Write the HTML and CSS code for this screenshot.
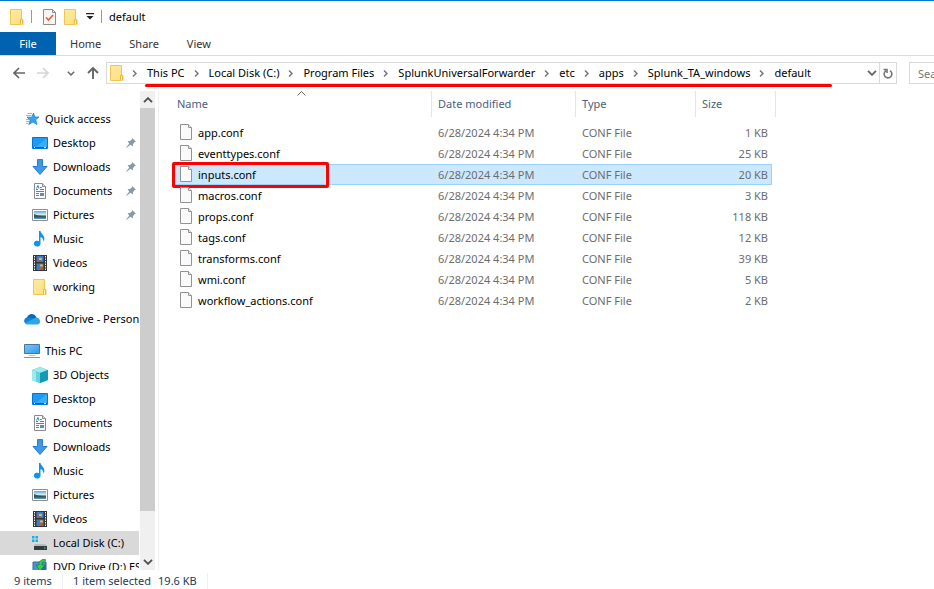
FILE: index.html
```html
<!DOCTYPE html>
<html lang="en">
<head>
<meta charset="utf-8">
<title>default</title>
<link rel="stylesheet" href="styles.css">
</head>
<body>
<svg class="defs" aria-hidden="true">
  <defs>
    <linearGradient id="g-folder" x1="0" y1="0" x2="1" y2="1"><stop offset="0" stop-color="#ffeaa2"/><stop offset="1" stop-color="#fddf7e"/></linearGradient>
    <linearGradient id="g-screen" x1="0" y1="0" x2="1" y2="1"><stop offset="0" stop-color="#7cc7fb"/><stop offset="1" stop-color="#2d9bec"/></linearGradient>
    <linearGradient id="g-sky" x1="0" y1="0" x2="0" y2="1"><stop offset="0" stop-color="#5aa9e6"/><stop offset=".5" stop-color="#e4f3fa"/><stop offset=".6" stop-color="#37695d"/><stop offset="1" stop-color="#5f9ac5"/></linearGradient>
  </defs>
  <symbol id="folder" viewBox="0 0 14 16"><path d="M.5.5h11v10h1.500v5h-12.500z" fill="url(#g-folder)" stroke="#efc656"/><path d="M10.500 15.500v-5h2v5" fill="#fff0b5" stroke="#e9bb3f"/></symbol>
  <symbol id="check" viewBox="0 0 13 16"><path d="M.5.500h9l3 3v12H.500z" fill="#f5f5f5" stroke="#8c8c8c"/><path d="M9.500.500v3h3" fill="none" stroke="#8c8c8c"/><path d="M3 8.500l2.500 2.500 4.500-5" fill="none" stroke="#e8622a" stroke-width="1.700"/></symbol>
  <symbol id="more" viewBox="0 0 8 7"><path d="M0 0h8v1.300H0zM.5 3h7L4 6.500z" fill="#222"/></symbol>
  <symbol id="left" viewBox="0 0 12 12"><path d="M12 6H1M6 1L1 6l5 5" fill="none" stroke="currentColor" stroke-width="1.700"/></symbol>
  <symbol id="right" viewBox="0 0 12 12"><path d="M0 6h11M6 1l5 5-5 5" fill="none" stroke="currentColor" stroke-width="1.700"/></symbol>
  <symbol id="up" viewBox="0 0 12 12"><path d="M6 12V1M1 6l5-5 5 5" fill="none" stroke="currentColor" stroke-width="1.900"/></symbol>
  <symbol id="down" viewBox="0 0 10 6"><path d="M1 .8l4 4 4-4" fill="none" stroke="currentColor" stroke-width="1.900"/></symbol>
  <symbol id="top" viewBox="0 0 10 6"><path d="M1 5.200l4-4 4 4" fill="none" stroke="currentColor" stroke-width="1.900"/></symbol>
  <symbol id="sort" viewBox="0 0 9 5"><path d="M.5 4.500l4-4 4 4" fill="none" stroke="currentColor"/></symbol>
  <symbol id="sep" viewBox="0 0 5 7"><path d="M1 .5l3 3-3 3" fill="none" stroke="#777" stroke-width="1.500"/></symbol>
  <symbol id="refresh" viewBox="0 0 10 11"><path d="M7 2.600A3.900 3.900 0 1 1 3 2.600M.5 1.500h3.500v3.500" fill="none" stroke="#777" stroke-width="1.600"/></symbol>
  <symbol id="pin" viewBox="0 0 10 10"><path d="M6.200 0L10 3.800 8.800 4 7 6l-.3 2.500L4.500 6.700.5 9.800 0 9.500 3.300 5.500 1.500 3.300 4 3l2-1.800z" fill="#8a99a6"/></symbol>
  <symbol id="star" viewBox="0 0 16 16"><path d="M9.500 2l1.300 4h4.200l-3.300 2.800L13 13.500l-4-2.600-4.200 2.600 1.400-4.600L3 6.200h4.800z" fill="#35a4f0" stroke="#1b86d1" stroke-width=".8"/><path d="M3.500 2.500H8M2 4.500h5.500M2 8.500h3M2 10.500h3M2 12.500h2" stroke="#58b5ee" stroke-width=".8"/></symbol>
  <symbol id="desktop" viewBox="0 0 16 16"><path d="M.5 2.500h15v11H.5z" fill="#189cf7" stroke="#0873c8"/><path d="M15 3v9H4z" fill="#39adfb"/><path d="M1 12.500h14" stroke="#075da5"/><path d="M2 12.500h1M12 12.500h2" stroke="#fff"/></symbol>
  <symbol id="download" viewBox="0 0 16 16"><path d="M5.500.5h5v7h4.500L8 15.500 1 7.500h4.500z" fill="#3f98e3" stroke="#2b7fd0"/></symbol>
  <symbol id="document" viewBox="0 0 16 16"><path d="M2.500.5h8l3 3v12h-11z" fill="#fafafa" stroke="#8b8b8b"/><path d="M10.500.5v3h3" fill="#ddd" stroke="#8b8b8b"/><path d="M4 6.500h2M8 4.500h2M8 6.500h4M4 8.500h8M4 10.500h3M4 12.500h3" stroke="#338bd0"/><path d="M4.500 5.500l1.500-3 1 3" fill="none" stroke="#2886d5"/><path d="M8 10h4v3H8z" fill="#5b91a7"/></symbol>
  <symbol id="picture" viewBox="0 0 16 16"><path d="M.5 2.500h15v11H.5z" fill="#fff" stroke="#909090"/><path d="M2 4h12v8H2z" fill="url(#g-sky)"/><path d="M2 7l4 1.500 8 1v1H2z" fill="#315b54"/></symbol>
  <symbol id="music" viewBox="0 0 16 16"><path d="M7 0h1.500c.3 3 4.500 4 3.800 8.500-.2 1-.8 1.500-1.300 2 .6-2.500-.5-4-2.500-4.500v6.800A3.300 2.900 0 1 1 7 10.200z" fill="#0a96ee"/></symbol>
  <symbol id="video" viewBox="0 0 16 16"><path d="M1 0h14v16H1z" fill="#353535"/><path d="M4.500 1h7v6h-7zM4.500 8.500h7v6.500h-7z" fill="#427dcb"/><path d="M2.500 1v14M13.500 1v14" stroke="#eee" stroke-dasharray="1.500 1"/><path d="M7 3h3v2H7z" fill="#e9b72d"/><path d="M5 5h3v2H5zM7 12h4v3H7z" fill="#b65834"/><path d="M8 9.500h3v2H8z" fill="#e8b52f"/></symbol>
  <symbol id="cloud" viewBox="0 0 16 16"><path d="M3 6.500C4.500 2 10.500 1.500 12.500 6.500L14 9l-7 3.500L1.500 12A3.600 3.600 0 0 1 3 6.500z" fill="#0868b9"/><path d="M3 6.500c2-.7 3.600-.3 5 .7l3.500 2L5 13H3C-1 12.500-.5 7 3 6.500z" fill="#1280d3"/><path d="M1 12l7-3.500c1.500-.8 2.500-2.200 4.500-2 2.500.4 3.500 2 3.500 4a3 3 0 0 1-3 3H4c-1.300 0-2.300-.5-3-1.500z" fill="#2aa7ea"/></symbol>
  <symbol id="pc" viewBox="0 0 16 16"><path d="M.5 1.500h15v9H.5z" fill="url(#g-screen)" stroke="#53738e"/><path d="M5 12.500h6" stroke="#b7c2ca"/><path d="M0 14.500h16" stroke="#8198aa"/></symbol>
  <symbol id="cube" viewBox="0 0 16 16"><path d="M0 3l8-3 8 3v10l-8 3-8-3z" fill="#2fb6cc"/><path d="M0 3l8-3 8 3-8 3z" fill="#9eebed"/><path d="M0 3l8 3v10l-8-3z" fill="#61d4dc"/><path d="M8 6l8-3v10l-8 3z" fill="#1599b5"/><path d="M0 3l4 1.500v10L0 13z" fill="#a0e9e9"/></symbol>
  <symbol id="disk" viewBox="0 0 16 16"><path d="M0 1h2.500v2.500H0zM3.500 1H6v2.500H3.500zM0 4.500h2.500V7H0zM3.500 4.500H6V7H3.500z" fill="#12b2ec"/><path d="M3 9h10l2 2H2z" fill="#b9bdc0"/><path d="M2 11h13v4H2z" fill="#343b3d"/><path d="M12 13h1.500" stroke="#4ee37c"/></symbol>
  <symbol id="dvd" viewBox="0 0 16 16"><path d="M1 3h13v11H1z" fill="#4795d7" stroke="#336b9d"/><path d="M3 14l11-9v9z" fill="#296fab"/><path d="M11 0L7 3v3H4l4 6 5-6h-3V4l4-3z" fill="#39cf4b" stroke="#15812c" stroke-width=".7"/></symbol>
  <symbol id="file" viewBox="0 0 12 16"><path d="M.5.500h8l3 3v12H.500z" fill="#fafafa" stroke="#929292"/><path d="M8.500.500v3h3" fill="#eee" stroke="#929292"/></symbol>
</svg>

<div class="window">
  <header class="titlebar">
    <svg class="folder"><use href="#folder"/></svg>
    <span class="bar"></span>
    <div class="quick">
      <button class="plain" aria-label="Properties"><svg class="check"><use href="#check"/></svg></button>
      <button class="plain" aria-label="New folder"><svg class="folder"><use href="#folder"/></svg></button>
      <button class="plain" aria-label="Customize toolbar"><svg class="more"><use href="#more"/></svg></button>
    </div>
    <span class="bar"></span>
    <h1>default</h1>
  </header>

  <nav class="ribbon">
    <button class="tab file-tab">File</button>
    <button class="tab">Home</button>
    <button class="tab">Share</button>
    <button class="tab">View</button>
  </nav>

  <div class="navbar">
    <div class="arrows">
      <button class="plain" aria-label="Back"><svg class="arrow"><use href="#left"/></svg></button>
      <button class="plain faint" aria-label="Forward"><svg class="arrow"><use href="#right"/></svg></button>
      <button class="plain recent" aria-label="Recent locations"><svg><use href="#down"/></svg></button>
      <button class="plain" aria-label="Up"><svg class="arrow"><use href="#up"/></svg></button>
    </div>
    <div class="address">
      <svg class="folder"><use href="#folder"/></svg>
      <svg class="sep"><use href="#sep"/></svg><a href="#">This PC</a>
      <svg class="sep"><use href="#sep"/></svg><a href="#">Local Disk (C:)</a>
      <svg class="sep"><use href="#sep"/></svg><a href="#">Program Files</a>
      <svg class="sep"><use href="#sep"/></svg><a href="#">SplunkUniversalForwarder</a>
      <svg class="sep"><use href="#sep"/></svg><a href="#">etc</a>
      <svg class="sep"><use href="#sep"/></svg><a href="#">apps</a>
      <svg class="sep"><use href="#sep"/></svg><a href="#">Splunk_TA_windows</a>
      <svg class="sep"><use href="#sep"/></svg><a href="#">default</a>
      <button class="plain history" aria-label="Previous locations"><svg class="chevron"><use href="#down"/></svg></button>
      <button class="plain refresh" aria-label="Refresh"><svg><use href="#refresh"/></svg></button>
      <span class="underline"></span>
    </div>
    <input class="search" type="text" placeholder="Search default" aria-label="Search default">
  </div>

  <div class="body">
    <aside class="sidebar">
      <div class="tree">
        <ul>
          <li><a href="#"><svg><use href="#star"/></svg>Quick access</a></li>
          <li class="sub"><a href="#"><svg><use href="#desktop"/></svg>Desktop<svg class="pin"><use href="#pin"/></svg></a></li>
          <li class="sub"><a href="#"><svg><use href="#download"/></svg>Downloads<svg class="pin"><use href="#pin"/></svg></a></li>
          <li class="sub"><a href="#"><svg><use href="#document"/></svg>Documents<svg class="pin"><use href="#pin"/></svg></a></li>
          <li class="sub"><a href="#"><svg><use href="#picture"/></svg>Pictures<svg class="pin"><use href="#pin"/></svg></a></li>
          <li class="sub"><a href="#"><svg><use href="#music"/></svg>Music</a></li>
          <li class="sub"><a href="#"><svg><use href="#video"/></svg>Videos</a></li>
          <li class="sub"><a href="#"><svg><use href="#folder"/></svg>working</a></li>
        </ul>
        <ul>
          <li><a href="#"><svg><use href="#cloud"/></svg>OneDrive - Personal</a></li>
        </ul>
        <ul>
          <li><a href="#"><svg><use href="#pc"/></svg>This PC</a></li>
          <li class="sub"><a href="#"><svg><use href="#cube"/></svg>3D Objects</a></li>
          <li class="sub"><a href="#"><svg><use href="#desktop"/></svg>Desktop</a></li>
          <li class="sub"><a href="#"><svg><use href="#document"/></svg>Documents</a></li>
          <li class="sub"><a href="#"><svg><use href="#download"/></svg>Downloads</a></li>
          <li class="sub"><a href="#"><svg><use href="#music"/></svg>Music</a></li>
          <li class="sub"><a href="#"><svg><use href="#picture"/></svg>Pictures</a></li>
          <li class="sub"><a href="#"><svg><use href="#video"/></svg>Videos</a></li>
          <li class="sub current"><a href="#"><svg><use href="#disk"/></svg>Local Disk (C:)</a></li>
          <li class="sub"><a href="#"><svg><use href="#dvd"/></svg>DVD Drive (D:) ESD-ISO</a></li>
        </ul>
      </div>
      <div class="scrollbar">
        <button class="plain" aria-label="Scroll up"><svg class="chevron"><use href="#top"/></svg></button>
        <div class="thumb"></div>
        <button class="plain" aria-label="Scroll down"><svg class="chevron"><use href="#down"/></svg></button>
      </div>
    </aside>

    <main class="files">
      <table>
        <thead>
          <tr><th class="name">Name<svg class="sort"><use href="#sort"/></svg></th><th class="date">Date modified</th><th class="type">Type</th><th class="size">Size</th></tr>
        </thead>
        <tbody>
          <tr><td><svg><use href="#file"/></svg>app.conf</td><td>6/28/2024 4:34 PM</td><td>CONF File</td><td>1 KB</td></tr>
          <tr><td><svg><use href="#file"/></svg>eventtypes.conf</td><td>6/28/2024 4:34 PM</td><td>CONF File</td><td>25 KB</td></tr>
          <tr class="selected"><td><svg><use href="#file"/></svg>inputs.conf<span class="highlight"></span></td><td>6/28/2024 4:34 PM</td><td>CONF File</td><td>20 KB</td></tr>
          <tr><td><svg><use href="#file"/></svg>macros.conf</td><td>6/28/2024 4:34 PM</td><td>CONF File</td><td>3 KB</td></tr>
          <tr><td><svg><use href="#file"/></svg>props.conf</td><td>6/28/2024 4:34 PM</td><td>CONF File</td><td>118 KB</td></tr>
          <tr><td><svg><use href="#file"/></svg>tags.conf</td><td>6/28/2024 4:34 PM</td><td>CONF File</td><td>12 KB</td></tr>
          <tr><td><svg><use href="#file"/></svg>transforms.conf</td><td>6/28/2024 4:34 PM</td><td>CONF File</td><td>39 KB</td></tr>
          <tr><td><svg><use href="#file"/></svg>wmi.conf</td><td>6/28/2024 4:34 PM</td><td>CONF File</td><td>5 KB</td></tr>
          <tr><td><svg><use href="#file"/></svg>workflow_actions.conf</td><td>6/28/2024 4:34 PM</td><td>CONF File</td><td>2 KB</td></tr>
        </tbody>
      </table>
    </main>
  </div>

  <footer class="status">
    <span class="count">9 items</span>
    <span class="picked"><span>1 item selected</span><span>19.6 KB</span></span>
  </footer>
</div>
</body>
</html>
```
FILE: styles.css
```css
* { box-sizing: border-box; }
body { margin: 0; background: #fff; color: #000; font: 11px/16px "Noto Sans", "Open Sans", sans-serif; }
a { color: inherit; text-decoration: none; white-space: nowrap; }
ul { list-style: none; margin: 0; padding: 0; }
svg { display: block; flex: none; width: 16px; height: 16px; }
.defs { position: absolute; width: 0; height: 0; }
button, input { font: inherit; color: inherit; }
.plain { display: flex; align-items: center; justify-content: center; margin: 0; padding: 0; border: 0; background: none; }

.window { display: flex; flex-direction: column; height: 100vh; overflow: hidden; border-top: 1px solid #0078d7; }
svg.folder { width: 14px; height: 16px; }

.titlebar { display: flex; align-items: center; flex: none; height: 31px; padding-left: 10px; gap: 7px; }
.titlebar h1 { margin: 0; font: inherit; font-size: 11px; }
.quick { display: flex; align-items: center; gap: 8px; padding-left: 4px; }
svg.check { width: 13px; height: 16px; }
svg.more { width: 8px; height: 7px; }
.bar { width: 1px; height: 13px; background: #999; }

.ribbon { display: flex; flex: none; height: 24px; border-bottom: 1px solid #dadbdc; }
.tab { padding: 0 14px; border: 0; background: none; color: #333; }
.file-tab { width: 56px; background: #0063b1; color: #fff; }

.navbar { display: flex; flex: none; height: 35px; padding-top: 6px; }
.arrows { display: flex; flex: none; align-items: center; justify-content: space-between; width: 106px; height: 22px; padding: 0 7px 0 13px; color: #666; }
svg.arrow { width: 12px; height: 12px; }
.recent { padding-left: 5px; }
.recent svg { width: 8px; height: 5px; }
.faint { color: #d5d5d5; }
.address { position: relative; display: flex; flex: 1; align-items: center; height: 22px; padding-left: 3px; border: 1px solid #d9d9d9; }
.address svg.folder { margin-right: -1px; }
.sep { width: 5px; height: 7px; margin: 0 10px 0 9px; }
.history { width: 14px; margin-left: auto; color: #666; }
.refresh { width: 17px; height: 20px; border-left: 1px solid #d9d9d9; }
.refresh svg { width: 10px; height: 11px; }
.chevron { width: 10px; height: 6px; }
.underline { position: absolute; left: 38px; top: 21px; width: 687px; height: 3px; border-radius: 2px; background: #f00; }
.search { flex: none; width: 25px; height: 22px; margin-left: 12px; padding: 0 0 0 8px; border: 1px solid #d9d9d9; border-right: 0; outline: 0; border-radius: 0; }
.search::placeholder { color: #777; opacity: 1; }

.body { display: flex; flex: 1; min-height: 0; }
.sidebar { display: flex; flex: none; width: 159px; border-right: 1px solid #f0f0f0; }
.tree { width: 139px; padding-top: 16px; overflow: hidden; }
.tree ul + ul { margin-top: 8px; }
.tree a { display: flex; align-items: center; height: 24px; padding-left: 24px; gap: 5px; }
.tree .sub a { padding-left: 32px; }
.tree .pin { width: 10px; height: 10px; margin: 0 3px 0 auto; }
.current { background: #d9d9d9; }
.scrollbar { display: flex; flex-direction: column; width: 15px; margin-left: 1px; background: #f0f0f0; color: #505050; }
.scrollbar button { height: 17px; flex: none; }
.thumb { height: 403px; margin-bottom: auto; background: #cdcdcd; }

.files { flex: 1; padding-left: 13px; }
table { width: 600px; table-layout: fixed; border-collapse: separate; border-spacing: 0; }
th { position: relative; height: 26px; padding: 0 0 0 6px; border-right: 1px solid #e5e5e5; color: #4c607a; font-weight: 400; text-align: left; }
th.name { width: 260px; padding-left: 5px; }
th.date { width: 144px; }
th.type { width: 120px; }
th.size { width: 76px; border-right: 0; }
th.size::after { content: ""; position: absolute; top: 0; right: -4px; width: 1px; height: 26px; background: #e5e5e5; }
.sort { position: absolute; left: 125px; top: 0; width: 9px; height: 5px; color: #666; }
tbody::before { content: ""; display: block; height: 5px; }
td { height: 21px; padding: 0 0 0 6px; color: #6d6d6d; border: 0 solid #99d1ff; white-space: nowrap; }
td:first-child { position: relative; padding-left: 26px; color: #000; }
td svg { position: absolute; left: 8px; top: 2px; width: 12px; height: 16px; }
td:last-child { padding-right: 4px; text-align: right; }
.selected td { background: #cce8ff; border-width: 1px 0; }
.selected td svg { top: 1px; }
.selected td:last-child { border-right-width: 1px; padding-right: 3px; }
.highlight { position: absolute; left: 0; top: -3px; width: 157px; height: 26px; border: 3px solid #f00; border-radius: 2px; }

.status { display: flex; flex: none; align-items: center; height: 19px; padding: 3px 14px 0; color: #1e395b; }
.count { width: 49px; border-right: 1px solid #f0f0f0; }
.picked { display: flex; gap: 7px; padding: 0 10px; border-right: 1px solid #f0f0f0; }
```
